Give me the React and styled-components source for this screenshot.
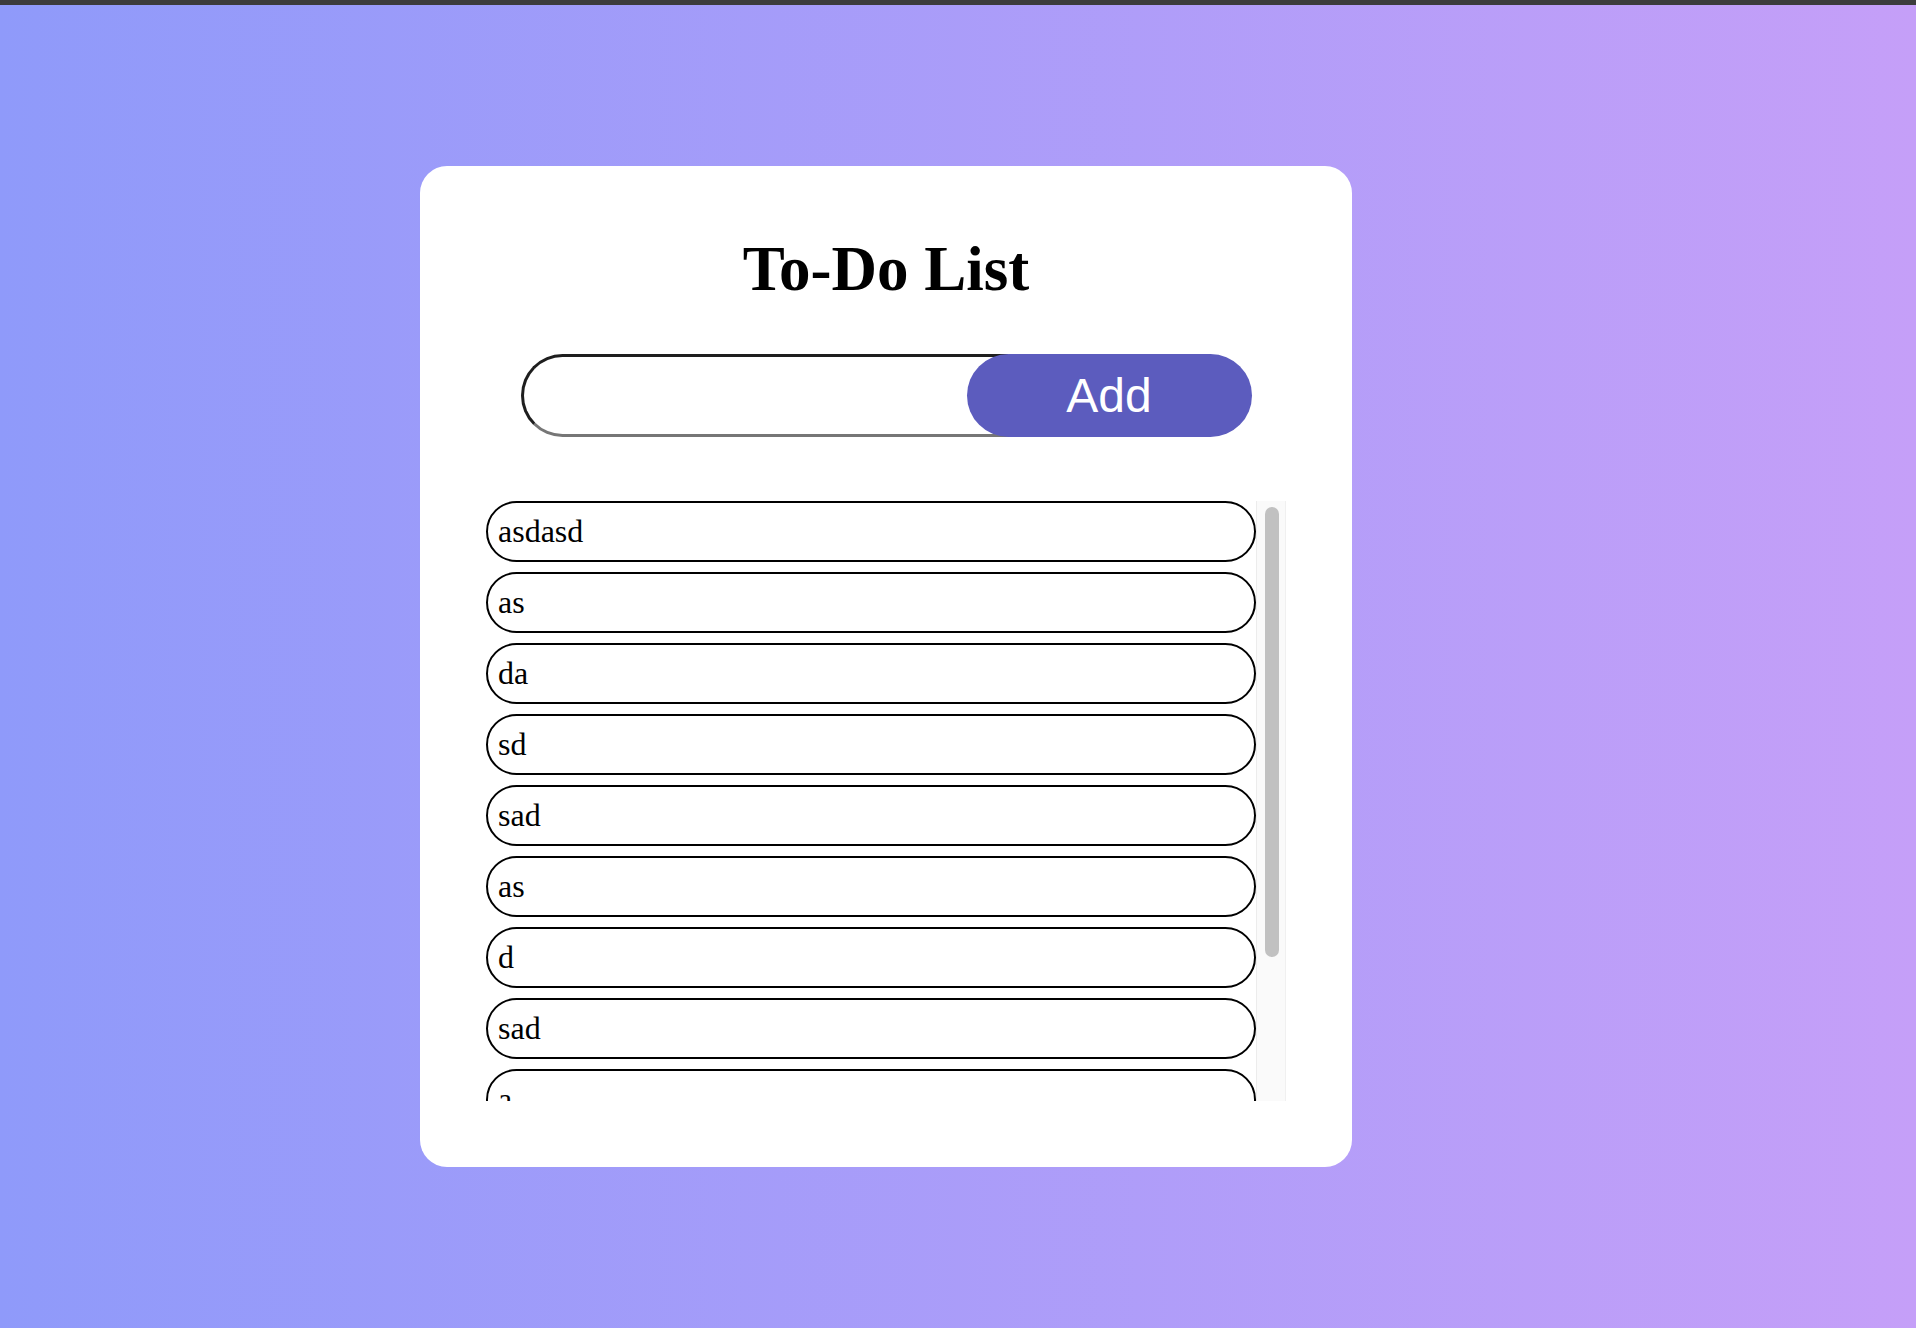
import React, { useState } from 'react';
import styled, { createGlobalStyle } from 'styled-components';

const GlobalStyle = createGlobalStyle`
  html, body {
    margin: 0;
    padding: 0;
  }

  body {
    font-family: 'Liberation Serif', 'Times New Roman', serif;
  }
`;

const TopBar = styled.div`
  height: 5px;
  background: #3c3c3c;
`;

const Page = styled.main`
  min-height: 1323px;
  box-sizing: border-box;
  padding: 161px 0 0 420px;
  background: linear-gradient(to right, #8f9afa, #c59ff8);
`;

const Card = styled.section`
  width: 932px;
  height: 1001px;
  box-sizing: border-box;
  padding-top: 67px;
  background: #fff;
  border-radius: 27px;
  display: flex;
  flex-direction: column;
  align-items: center;
`;

const Title = styled.h1`
  margin: 0;
  font-family: 'Liberation Serif', 'Times New Roman', serif;
  font-size: 63px;
  line-height: 72px;
  font-weight: 700;
  color: #000;
`;

const InputRow = styled.form`
  margin-top: 49px;
  width: 731px;
  display: flex;
`;

const TaskInput = styled.input`
  flex: 1;
  min-width: 0;
  height: 83px;
  box-sizing: border-box;
  padding: 0 24px;
  border: 3px solid;
  border-color: #1e1e1e #767676 #767676 #1e1e1e;
  border-radius: 42px;
  font-size: 32px;
  outline: none;
`;

const AddButton = styled.button`
  width: 285px;
  height: 83px;
  margin-left: -120px;
  border: 0;
  border-radius: 42px;
  background: #5c5cbe;
  color: #fff;
  font-family: 'Liberation Sans', Arial, sans-serif;
  font-size: 48px;
  cursor: pointer;
  position: relative;
`;

const ListFrame = styled.div`
  margin-top: 64px;
  width: 800px;
  height: 600px;
  display: flex;
`;

const List = styled.ul`
  flex: 1;
  margin: 0;
  padding: 0;
  list-style: none;
  overflow: hidden;
`;

const ScrollTrack = styled.div`
  width: 30px;
  box-sizing: border-box;
  padding: 6px 6px 0 8px;
  background: #fafafa;
  border-left: 1px solid #ececec;
  border-right: 1px solid #f0f0f0;
`;

const ScrollThumb = styled.div`
  height: 450px;
  border-radius: 8px;
  background: #c1c1c1;
`;

const Item = styled.li`
  height: 61px;
  box-sizing: border-box;
  margin-bottom: 10px;
  padding-left: 10px;
  border: 2px solid #000;
  border-radius: 31px;
  font-size: 32px;
  line-height: 57px;
  color: #000;
`;

const initialTasks = ['asdasd', 'as', 'da', 'sd', 'sad', 'as', 'd', 'sad', 'a', 'sd', 'asd'];

export default function App() {
  const [tasks, setTasks] = useState(initialTasks);
  const [value, setValue] = useState('');

  const handleSubmit = (e) => {
    e.preventDefault();
    if (!value.trim()) return;
    setTasks([...tasks, value.trim()]);
    setValue('');
  };

  return (
    <>
      <GlobalStyle />
      <TopBar />
      <Page>
        <Card>
          <Title>To-Do List</Title>
          <InputRow onSubmit={handleSubmit}>
            <TaskInput value={value} onChange={(e) => setValue(e.target.value)} />
            <AddButton type="submit">Add</AddButton>
          </InputRow>
          <ListFrame>
            <List>
              {tasks.map((task, i) => (
                <Item key={i}>{task}</Item>
              ))}
            </List>
            <ScrollTrack>
              <ScrollThumb />
            </ScrollTrack>
          </ListFrame>
        </Card>
      </Page>
    </>
  );
}
